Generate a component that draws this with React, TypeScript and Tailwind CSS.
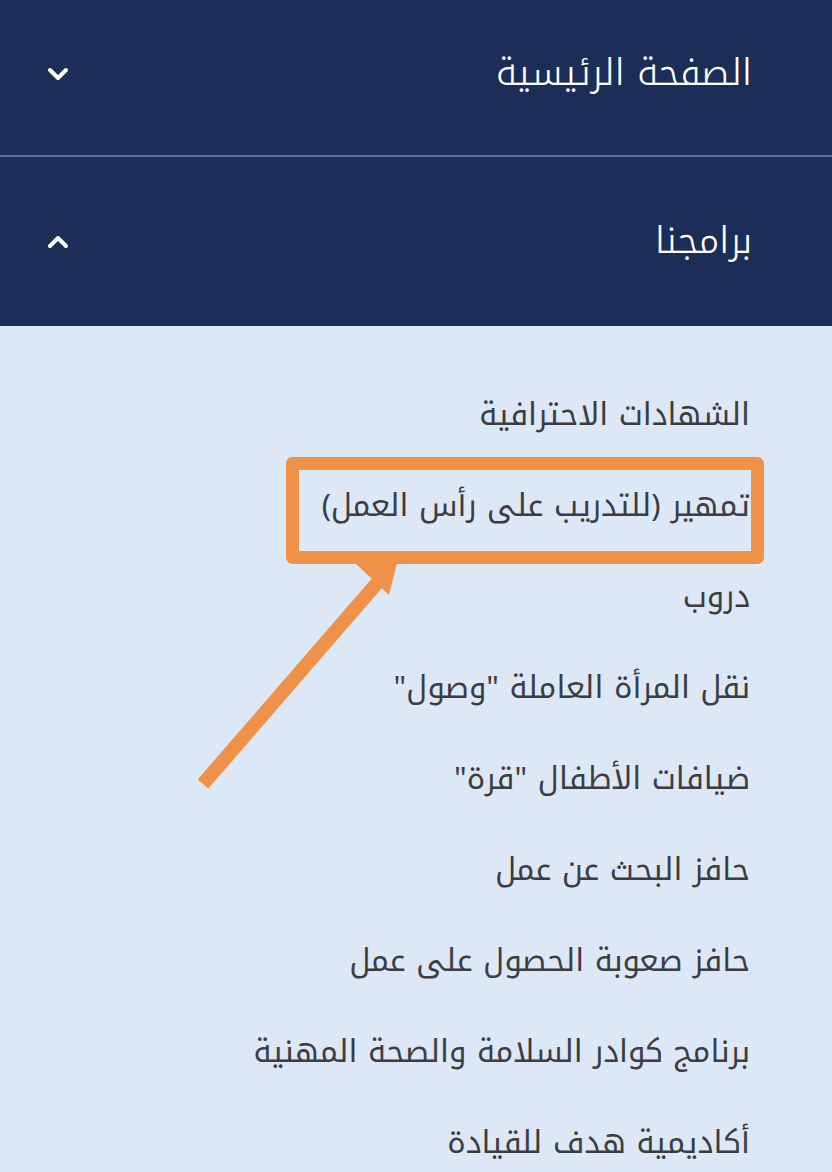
import React from 'react'

const PROGRAMS = [
  'الشهادات الاحترافية',
  'تمهير (للتدريب على رأس العمل)',
  'دروب',
  'نقل المرأة العاملة "وصول"',
  'ضيافات الأطفال "قرة"',
  'حافز البحث عن عمل',
  'حافز صعوبة الحصول على عمل',
  'برنامج كوادر السلامة والصحة المهنية',
  'أكاديمية هدف للقيادة',
]

const FONT = "font-['Noto_Kufi_Arabic','Noto_Sans_Arabic','DejaVu_Sans',sans-serif]"

function Chevron({ up }: { up?: boolean }) {
  return (
    <svg width="22" height="14" viewBox="0 0 22 14" className="shrink-0">
      <polyline
        points={up ? '3,11 11,3 19,11' : '3,3 11,11 19,3'}
        fill="none"
        stroke="white"
        strokeWidth="4"
        strokeLinecap="round"
        strokeLinejoin="round"
      />
    </svg>
  )
}

function MenuHeader({ label, open, className }: { label: string; open?: boolean; className: string }) {
  return (
    <div className={`flex items-center justify-between pr-[80px] pl-[47px] bg-[#1c2d57] ${className}`}>
      <span className="text-[37px] font-light text-white leading-none">{label}</span>
      <Chevron up={open} />
    </div>
  )
}

export default function App() {
  return (
    <div dir="rtl" className={`relative w-[832px] h-[1172px] overflow-hidden bg-[#dde8f7] ${FONT}`}>
      <MenuHeader label="الصفحة الرئيسية" className="h-[155px] pb-[8px]" />
      <div className="h-[2px] bg-[#5d6d93]" />
      <MenuHeader label="برامجنا" open className="h-[169px]" />

      <ul className="flex flex-col gap-[51px] pt-[68px] pr-[82px]">
        {PROGRAMS.map((p) => (
          <li key={p} className="h-[40px] flex items-center text-[31px] text-[#3b3d40] leading-none">
            {p}
          </li>
        ))}
      </ul>

      {/* annotation: highlight box + arrow */}
      <svg className="absolute inset-0 pointer-events-none" width="832" height="1172" viewBox="0 0 832 1172">
        <line x1="203" y1="784" x2="378" y2="582" stroke="#f0914a" strokeWidth="14" />
        <polygon points="355,563 397,563 389,595" fill="#f0914a" />
        <rect
          x="292.5"
          y="463.5"
          width="465"
          height="94"
          fill="none"
          stroke="#f0914a"
          strokeWidth="13"
          strokeLinejoin="round"
        />
      </svg>
    </div>
  )
}
